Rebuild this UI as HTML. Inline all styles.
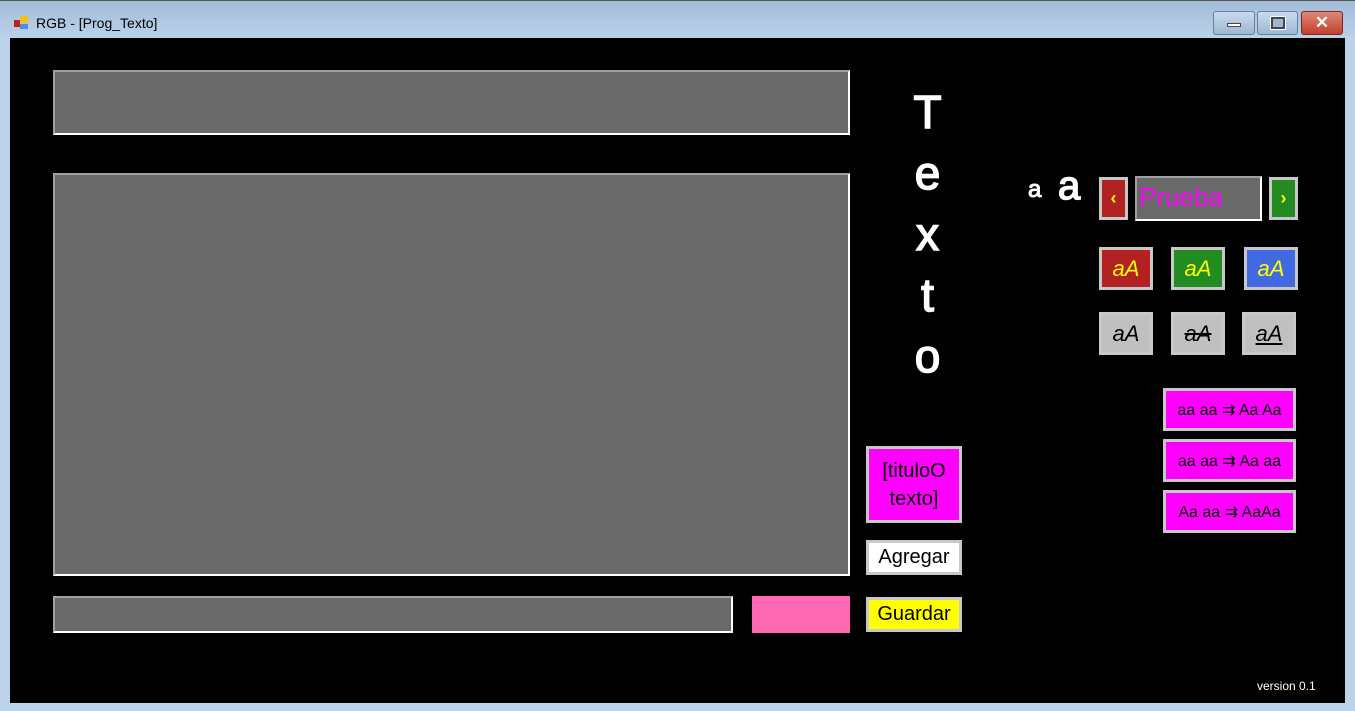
<!DOCTYPE html>
<html><head><meta charset="utf-8"><style>
*{margin:0;padding:0;box-sizing:border-box}
body{width:1355px;height:711px;overflow:hidden;background:#bcd3ea;font-family:"Comic Sans MS","Liberation Sans",sans-serif;position:relative}
.a{position:absolute}
.title{left:0;top:0;width:1355px;height:38px;background:linear-gradient(#a3bcd8,#bad1ea);border-top:1px solid #555}
.main{left:10px;top:38px;width:1335px;height:665px;background:#000}
.in{background:#696969;border-top:2px solid #a0a0a0;border-left:2px solid #a0a0a0;border-bottom:2px solid #fff;border-right:2px solid #fff}
.btn{border:3px solid #c8c8c8;display:flex;align-items:center;justify-content:center;color:#000;text-align:center}
.wb{top:11px;height:24px;border:1px solid #6a7f9a;border-radius:3px;background:linear-gradient(#c9dbef,#9fb7d3)}
</style></head><body>
<div class="a title"></div>
<div class="a" style="left:14px;top:15px;width:16px;height:16px">
<div class="a" style="left:0;top:5px;width:6px;height:7px;background:#c0201c"></div>
<div class="a" style="left:6px;top:1px;width:8px;height:7px;background:#f0c020"></div>
<div class="a" style="left:6px;top:9px;width:8px;height:5px;background:#4a8ee0"></div></div>
<div class="a" style="left:36px;top:15px;font:14px 'Liberation Sans',sans-serif;color:#000">RGB - [Prog_Texto]</div>
<div class="a wb" style="left:1213px;width:42px"><div class="a" style="left:13px;top:11px;width:14px;height:4px;background:#fff;border:1px solid #445"></div></div>
<div class="a wb" style="left:1257px;width:41px"><div class="a" style="left:13px;top:5px;width:14px;height:12px;border:2px solid #445;background:#9fb7d3;box-shadow:0 0 0 1px #fff"></div></div>
<div class="a wb" style="left:1301px;width:42px;background:linear-gradient(#e08878,#c0402c);border-color:#7a2a20;color:#fff;font:bold 17px 'Liberation Sans',sans-serif;text-align:center;line-height:22px">✕</div>
<div class="a main"></div>
<div class="a in" style="left:53px;top:70px;width:797px;height:65px"></div>
<div class="a in" style="left:53px;top:173px;width:797px;height:403px"></div>
<div class="a in" style="left:53px;top:596px;width:680px;height:37px"></div>
<div class="a" style="left:752px;top:596px;width:98px;height:37px;background:#ff69b4"></div>
<div class="a" style="left:895px;top:82px;width:65px;color:#fff;font-size:46px;line-height:61px;text-align:center;-webkit-text-stroke:1.5px #fff">T<br>e<br>x<br>t<br>o</div>
<div class="a" style="left:1028px;top:176px;color:#fff;font-size:24px;-webkit-text-stroke:1px #fff">a</div>
<div class="a" style="left:1058px;top:164px;color:#fff;font-size:40px;-webkit-text-stroke:1.5px #fff">a</div>
<div class="a btn" style="left:1099px;top:177px;width:29px;height:43px;background:#b22222;color:#ff0;font-size:18px;font-weight:bold">‹</div>
<div class="a in" style="left:1135px;top:176px;width:127px;height:45px;color:#f0f;font:26px 'Liberation Sans',sans-serif;padding-left:2px;line-height:38px">Prueba</div>
<div class="a btn" style="left:1269px;top:177px;width:29px;height:43px;background:#228b22;color:#ff0;font-size:18px;font-weight:bold">›</div>
<div class="a btn" style="left:1099px;top:247px;width:54px;height:43px;background:#b22222;color:#ff0;font-size:22px;font-style:italic">aA</div>
<div class="a btn" style="left:1171px;top:247px;width:54px;height:43px;background:#228b22;color:#ff0;font-size:22px;font-style:italic">aA</div>
<div class="a btn" style="left:1244px;top:247px;width:54px;height:43px;background:#4169e1;color:#ff0;font-size:22px;font-style:italic">aA</div>
<div class="a btn" style="left:1099px;top:312px;width:54px;height:43px;background:#c0c0c0;font-size:22px;font-style:italic">aA</div>
<div class="a btn" style="left:1171px;top:312px;width:54px;height:43px;background:#c0c0c0;font-size:22px;font-style:italic;text-decoration:line-through">aA</div>
<div class="a btn" style="left:1242px;top:312px;width:54px;height:43px;background:#c0c0c0;font-size:22px;font-style:italic;text-decoration:underline">aA</div>
<div class="a btn" style="left:1163px;top:388px;width:133px;height:43px;background:#f0f;font-size:16px">aa aa ⇉ Aa Aa</div>
<div class="a btn" style="left:1163px;top:439px;width:133px;height:43px;background:#f0f;font-size:16px">aa aa ⇉ Aa aa</div>
<div class="a btn" style="left:1163px;top:490px;width:133px;height:43px;background:#f0f;font-size:16px">Aa aa ⇉ AaAa</div>
<div class="a btn" style="left:866px;top:446px;width:96px;height:77px;background:#f0f;font-size:20px;line-height:28px">[tituloO<br>texto]</div>
<div class="a btn" style="left:866px;top:540px;width:96px;height:35px;background:#fff;font-size:20px">Agregar</div>
<div class="a btn" style="left:866px;top:597px;width:96px;height:35px;background:#ff0;font-size:20px">Guardar</div>
<div class="a" style="left:1257px;top:679px;color:#fff;font:12px 'Liberation Sans',sans-serif">version 0.1</div>
</body></html>
